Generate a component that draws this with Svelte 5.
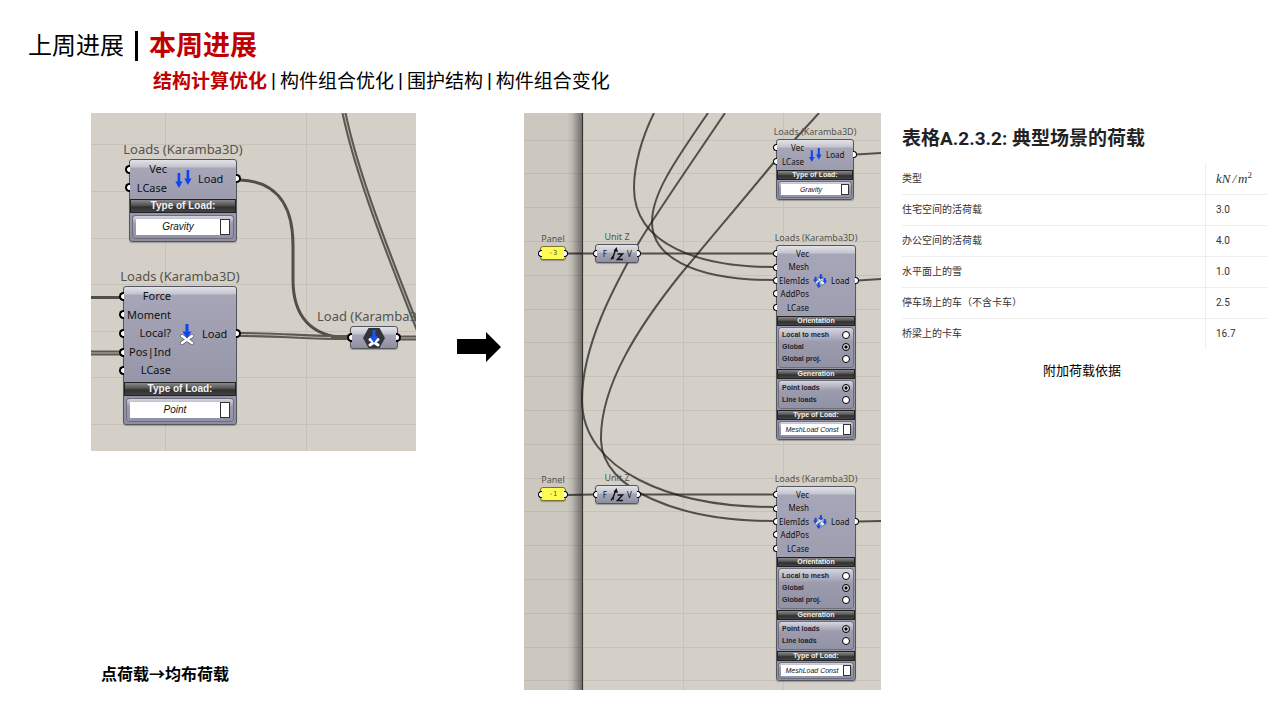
<script>
  const topics = ['结构计算优化', '构件组合优化', '围护结构', '构件组合变化'];

  const loads = [
    ['住宅空间的活荷载', '3.0'],
    ['办公空间的活荷载', '4.0'],
    ['水平面上的雪', '1.0'],
    ['停车场上的车（不含卡车）', '2.5'],
    ['桥梁上的卡车', '16.7'],
  ];

  const pointGraph = [
    { id: 'gravity', x: 38, y: 46, w: 108, inW: 38, insH: 37, inputs: ['Vec', 'LCase'], icon: 'gravity', type: 'Gravity' },
    { id: 'point', x: 32, y: 173, w: 114, inW: 48, insH: 93, inputs: ['Force', 'Moment', 'Local?', 'Pos|Ind', 'LCase'], icon: 'point', type: 'Point' },
  ];

  const meshInputs = ['Vec', 'Mesh', 'ElemIds', 'AddPos', 'LCase'];
  const meshGroups = [
    { title: 'Orientation', options: ['Local to mesh', 'Global', 'Global proj.'], picked: 1 },
    { title: 'Generation', options: ['Point loads', 'Line loads'], picked: 0 },
  ];
  const meshGraph = [
    { id: 'gravity2', x: 252, y: 26, w: 78, inW: 28, insH: 27, inputs: ['Vec', 'LCase'], icon: 'gravity', type: 'Gravity' },
    { id: 'mesh1', x: 252, y: 132, w: 80, inW: 33, insH: 67, inputs: meshInputs, icon: 'mesh', type: 'MeshLoad Const', groups: meshGroups },
    { id: 'mesh2', x: 252, y: 373, w: 80, inW: 33, insH: 67, inputs: meshInputs, icon: 'mesh', type: 'MeshLoad Const', groups: meshGroups },
  ];

  const units = [
    { value: '-3', y: 131 },
    { value: '-1', y: 372 },
  ];

  const gridSmall = { xs: [74, 215, 356, 497], ys: [31, 78, 125, 171, 218, 264, 311] };
  const gridTall = {
    xs: [59, 159, 259, 359, 459],
    ys: Array.from({ length: 17 }, (_, i) => Math.round(26.5 + i * 33.8)),
  };
</script>

{#snippet icon(kind)}
  {#if kind === 'gravity'}
    <svg class="icon" viewBox="0 0 18 18" aria-hidden="true">
      <path d="M3.600 3h2.600v8.500H8.500L4.900 18 1.300 11.500h2.300zM12.600 0h2.600v8.500h2.300L13.900 15l-3.600-6.500h2.300z" fill="#0c46f0" />
    </svg>
  {:else if kind === 'point'}
    <svg class="icon tallicon" viewBox="0 0 18 22" aria-hidden="true">
      <path d="M4 13l10 7M14 13L4 20" stroke="#6b6b78" stroke-width="4" stroke-linecap="round" />
      <path d="M4 13l10 7M14 13L4 20" stroke="#fff" stroke-width="2.600" stroke-linecap="round" />
      <path d="M7.500 1h3v7.500h3L9 15.500 4.500 8.500h3z" fill="#0c46f0" />
    </svg>
  {:else}
    <svg class="icon" viewBox="0 0 18 18" aria-hidden="true">
      <path d="M1 8.500L10.500 3.500 17.500 11 7.500 17z" fill="#eef1f8" stroke="#6a7082" stroke-width="1" />
      <path d="M5.500 6l6.500 8.500M13.500 7L4.500 12.500" stroke="#6a7082" stroke-width="1" />
      <path d="M8.800 0h2.600v3.500h2L10 7.500 6.800 3.500h2zM2 3.500h2.600V7h2L3.300 11 0 7h2zM14 5h2.400v3.500h1.600L15.200 12.500 12 8.500h2zM6 10.500h2.600V13.500h2L7.300 18 4 13.500h2z" fill="#1a49d2" />
    </svg>
  {/if}
{/snippet}

{#snippet node(n)}
  <div class="node" style="left:{n.x}px;top:{n.y}px;width:{n.w}px">
    <div class="name">Loads (Karamba3D)</div>
    <div class="body">
      <div class="ports" style="grid-template-columns:{n.inW}px var(--mid) 1fr">
        <div class="ins" style="height:{n.insH}px">
          {#each n.inputs as label}
            <span class="port in">{label}</span>
          {/each}
        </div>
        {@render icon(n.icon)}
        <span class="port out">Load</span>
      </div>
      {#each n.groups ?? [] as g}
        <div class="bar">{g.title}</div>
        <div class="tray options">
          {#each g.options as o, i}
            <label>{o}<input type="radio" name="{n.id}-{g.title}" checked={i === g.picked} /></label>
          {/each}
        </div>
      {/each}
      <label class="bar" for="{n.id}-type">Type of Load:</label>
      <div class="tray pick">
        <select id="{n.id}-type"><option>{n.type}</option></select>
      </div>
    </div>
  </div>
{/snippet}

{#snippet gridlines(g)}
  <g class="grid">
    {#each g.xs as x}<path d="M{x}.5 0V600" />{/each}
    {#each g.ys as y}<path d="M0 {y}.5H900" />{/each}
  </g>
{/snippet}

<div class="slide">
  <header>
    <h1><span>上周进展</span><i class="rule"></i><strong>本周进展</strong></h1>
    <nav aria-label="本周进展">
      {#each topics as t, i}
        {#if i}<span class="sep">|</span>{/if}
        <span class:current={i === 0}>{t}</span>
      {/each}
    </nav>
  </header>

  <main>
    <section class="before">
      <div class="canvas small">
        <svg class="wires" aria-hidden="true">
          {@render gridlines(gridSmall)}
          <g class="wire thick">
            <path d="M149 67C181 68 202 87 202 132V167C202 202 219 224 257 225" />
            <path d="M0 184.500H30" />
          </g>
          <g class="cable">
            <path d="M253 0C266 62 297 140 325 211L345 262" />
            <path d="M0 240H30" />
            <path d="M309 225H600" />
            <path d="M149 221.500C190 221.500 215 224.500 257 224.500" />
          </g>
          <g class="core">
            <path d="M253 0C266 62 297 140 325 211L345 262" />
            <path d="M0 240H30" />
            <path d="M309 225H600" />
            <path d="M149 221.500C190 221.500 215 224.500 240 224.500" />
          </g>
        </svg>
        {#each pointGraph as n}{@render node(n)}{/each}
        <div class="node param">
          <div class="name">Load (Karamba3D)</div>
          <div class="body">
            <span class="port in"></span>
            <svg viewBox="0 0 24 22" width="24" height="22" aria-hidden="true">
              <path d="M6.500 1h11L23 11l-5.500 10h-11L1 11z" fill="#33333a" />
              <path d="M8 12.500l8 5.500M16 12.500l-8 5.500" stroke="#fff" stroke-width="3" stroke-linecap="round" />
              <path d="M10.500 3h3v6.500h3L12 16 7.500 9.500h3z" fill="#1556f5" />
            </svg>
            <span class="port out"></span>
          </div>
        </div>
      </div>
      <p class="note">点荷载→均布荷载</p>
    </section>

    <svg class="arrow" viewBox="0 0 44 30" width="44" height="30" aria-hidden="true">
      <path d="M0 7h29V0l15 15-15 15v-8H0z" />
    </svg>

    <div class="canvas tall">
      <svg class="wires" aria-hidden="true">
        {@render gridlines(gridTall)}
        <g class="wire">
          <path d="M130 0C118 24 110 52 110 75C110 132 176 154 249 154" />
          <path d="M184 0C148 52 128 82 128 109C128 142 166 167 249 167" />
          <path d="M201 0C166 52 131 102 114 131C91 172 58 232 58 287C58 357 146 394 249 394" />
          <path d="M295 0L251 48C230 74 190 121 156 162C116 212 76 272 77 327C78 377 156 408 249 408" />
          <path d="M43 140.500H69M117 140.500H249M43 382L69 381.500M117 381.500H249" />
          <path d="M332 41.500L357 40H600M334 167.500L357 166H600M334 408.500L357 408H600" />
        </g>
      </svg>
      <div class="gutter"></div>
      {#each units as u}
        <div class="node panel" style="top:{u.y + 2}px">
          <div class="name">Panel</div>
          <div class="body"><span class="port in"></span><span>{u.value}</span><span class="port out"></span></div>
        </div>
        <div class="node unit" style="top:{u.y}px">
          <div class="name">Unit Z</div>
          <div class="body">
            <span class="port in">F</span>
            <svg viewBox="0 0 14 14" width="14" height="14" aria-hidden="true">
              <path d="M1 12.500l1.500-2.500 1.200 1.500M3 10L5.500 3" fill="none" stroke="#111" stroke-width="1.400" />
              <path d="M6.500 0L8 5 3.500 4z" fill="#111" />
              <path d="M7.500 7H12.500L7.500 12.500H13" fill="none" stroke="#111" stroke-width="1.500" />
            </svg>
            <span class="port out">V</span>
          </div>
        </div>
      {/each}
      {#each meshGraph as n}{@render node(n)}{/each}
    </div>

    <section class="basis">
      <h2>表格A.2.3.2: 典型场景的荷载</h2>
      <table>
        <thead>
          <tr><th scope="col">类型</th><th scope="col" class="math">kN<span>/</span>m<sup>2</sup></th></tr>
        </thead>
        <tbody>
          {#each loads as [kind, value]}
            <tr><td>{kind}</td><td>{value}</td></tr>
          {/each}
        </tbody>
      </table>
      <p>附加荷载依据</p>
    </section>
  </main>
</div>

<style>
  :global(body) {
    margin: 0;
    background: #fff;
  }
  .slide {
    box-sizing: border-box;
    min-height: 100vh;
    padding: 26px 13px 30px 28px;
    color: #000;
    font-family: 'Noto Sans CJK SC', sans-serif;
  }
  h1, h2, p { margin: 0; font-weight: 400; }
  h1 {
    display: flex;
    align-items: center;
    gap: 11px;
    font-size: 24px;
    line-height: 36px;
  }
  h1 .rule { width: 3px; height: 30px; margin-top: 4px; background: #000; }
  h1 strong { font-size: 27px; color: #c00000; }
  nav {
    display: flex;
    gap: 4px;
    padding-left: 125px;
    font-size: 19px;
    line-height: 36px;
  }
  .sep { font-family: 'Liberation Sans', sans-serif; }
  .current { font-weight: 700; color: #c00000; }

  main {
    display: grid;
    grid-template-columns: 325fr 108px 357fr 386fr;
    padding: 15px 0 0 63px;
  }
  .before { display: flex; flex-direction: column; justify-content: space-between; }
  .note { padding: 0 0 5px 10px; font-size: 16px; line-height: 24px; font-weight: 700; }
  .arrow { justify-self: end; margin: 219px 23px 0 0; }

  .canvas {
    position: relative;
    overflow: hidden;
    background: #d4d0c8;
    font-family: 'Noto Sans', sans-serif;
    color: #111;
  }
  .small {
    height: 338px;
    --title: 13px; --text: 11px; --cap: 10px; --type: 10px;
    --row: 18px; --mid: 31px; --bar: 14px; --icon: 18px; --field: 16px; --grip: 9px; --edge: 3px;
  }
  .tall {
    height: 577px;
    --title: 9px; --text: 8px; --cap: 7px; --type: 7px;
    --row: 13px; --mid: 22px; --bar: 10px; --icon: 14px; --field: 11px; --grip: 7px; --edge: 2px;
  }
  .wires { position: absolute; inset: 0; width: 100%; height: 100%; fill: none; }
  .grid { stroke: #c6c2b9; stroke-width: 1; }
  .wire { stroke: #1a1812; stroke-opacity: 0.7; stroke-width: 2; }
  .thick { stroke-width: 3; }
  .cable { stroke: #5a5850; stroke-width: 5; }
  .core { stroke: #bbb8b0; stroke-width: 1; }
  .gutter {
    position: absolute;
    inset: 0 auto 0 0;
    width: 58px;
    border-right: 1px solid #33322f;
    background: linear-gradient(90deg, #0000000a 0 43px, #0000001c 48px, #00000078 58px);
  }

  .node { position: absolute; }
  .name {
    position: absolute;
    left: 50%;
    bottom: 100%;
    transform: translateX(-50%);
    white-space: nowrap;
    font-size: var(--title);
    line-height: 20px;
    color: #55534e;
  }
  .tall .name { line-height: 14px; }
  .body {
    box-sizing: border-box;
    border: 1px solid #55555f;
    border-radius: 3px;
    background: linear-gradient(#e2e2e8 0, #c4c4ce 7px, #a6a6b8 8px, #8f8fa2 100%);
    box-shadow: 0 1px 1px #0004;
    font-size: var(--text);
  }
  .ports { display: grid; align-items: center; padding: 0 0 2px; margin: 0 -1px; }
  .tall .ports { padding-top: 1px; }
  .ins { display: grid; }
  .port { position: relative; display: block; line-height: var(--row); }
  .in { text-align: right; }
  .port::before {
    content: '';
    position: absolute;
    top: 50%;
    box-sizing: border-box;
    width: 5px;
    height: var(--grip);
    margin-top: calc(var(--grip) / -2);
    border: 2px solid #000;
    background: #fff;
  }
  .tall .port::before { width: 4px; border-width: 1px; }
  .in::before { left: -4px; border-right: 0 !important; border-radius: 9px 0 0 9px; }
  .out::before { right: -4px; border-left: 0 !important; border-radius: 0 9px 9px 0; }
  .tall .in::before { left: -3px; }
  .tall .out::before { right: -3px; }
  .icon { width: var(--icon); height: var(--icon); justify-self: center; fill: none; }
  .tallicon { height: 22px; }

  .bar {
    display: block;
    box-sizing: border-box;
    height: var(--bar);
    overflow: hidden;
    border: 1px solid #222;
    background: linear-gradient(#888 0, #5a5a5a 40%, #303030 60%, #444);
    color: #f2f2f2;
    text-align: center;
    font: 700 var(--cap) / calc(var(--bar) - 3px) 'Liberation Sans', sans-serif;
  }
  .tray {
    margin: var(--edge);
    padding: var(--edge);
    border-radius: 3px;
    background: linear-gradient(#d6d6e0, #9c9cae 35%, #9292a6);
    box-shadow: 0 0 0 1px #6d6d7c;
  }
  .options { display: grid; padding: 1px 3px 2px; }
  .options label {
    display: flex;
    justify-content: space-between;
    align-items: center;
    font: 700 7px / 12px 'Liberation Sans', sans-serif;
    color: #22222c;
  }
  .options input {
    appearance: none;
    box-sizing: border-box;
    width: 8px;
    height: 8px;
    margin: 0;
    border: 1px solid #000;
    border-radius: 50%;
    background: #fff;
  }
  .options input:checked { background: radial-gradient(#000 0 1px, #d5d5dc 2px); }
  .pick { position: relative; display: flex; }
  .pick::after {
    content: '';
    position: absolute;
    right: var(--edge);
    top: var(--edge);
    bottom: var(--edge);
    box-sizing: border-box;
    width: 10px;
    border: 1px solid #333;
    background: #fff;
    pointer-events: none;
  }
  .tall .pick::after { width: 8px; }
  select {
    appearance: none;
    flex: 1;
    min-width: 0;
    height: var(--field);
    margin: 0;
    padding: 0 10px 0 0;
    border: 0;
    border-radius: 0;
    background: #fff;
    color: #111;
    text-align: center;
    text-align-last: center;
    font: italic var(--type) / var(--field) 'Liberation Sans', sans-serif;
  }
  .tall select { padding-right: 8px; }

  .param { left: 259px; top: 213px; width: 48px; }
  .param .name { left: -33px; transform: none; }
  .param .body, .unit .body, .panel .body {
    display: flex;
    align-items: center;
    justify-content: space-between;
  }
  .param .body { height: 23px; }
  .param .port { width: 4px; height: 19px; }
  .unit { left: 71px; width: 44px; }
  .unit .body { height: 19px; }
  .unit .port { width: 11px; }
  .unit .out { text-align: left; }
  .panel { left: 16px; width: 26px; }
  .panel .body {
    height: 14px;
    border-color: #77752a;
    background: #fffb55;
    color: #55551c;
    font: 7px / 12px 'DejaVu Sans Mono', monospace;
  }
  .panel .port { width: 4px; height: 12px; }

  .basis {
    padding-left: 21px;
    color: #333;
    font-family: Roboto, 'Noto Sans CJK SC', sans-serif;
  }
  h2 { padding-top: 12px; font-size: 19px; line-height: 28px; font-weight: 700; color: #222; }
  table { width: 100%; margin-top: 11px; border-collapse: collapse; font-size: 10px; line-height: 14px; }
  th, td {
    height: 30px;
    padding: 0;
    border-bottom: 1px solid #ededed;
    text-align: left;
    font-weight: 400;
  }
  tr > :last-child { width: 51px; padding-left: 10px; border-left: 1px solid #ededed; }
  tbody tr:last-child td { border-bottom: 0; }
  .math { font: italic 13px / 14px 'Liberation Serif', serif; }
  .math span { padding: 0 2px; }
  .math sup { font-size: 9px; font-style: normal; line-height: 0; }
  .basis p { margin-top: 12px; padding-right: 5px; color: #000; text-align: center; font-size: 13px; line-height: 20px; }
</style>
